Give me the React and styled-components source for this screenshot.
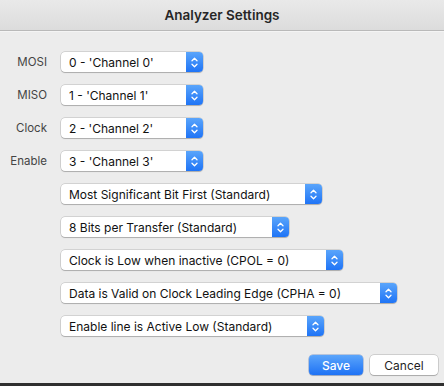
import { Fragment } from "react";
import styled, { createGlobalStyle } from "styled-components";

const GlobalStyle = createGlobalStyle`
  html, body {
    margin: 0;
    padding: 0;
    background: #ececec;
  }
  body {
    font-family: Inter, "Noto Sans", sans-serif;
    font-size: 12px;
    -webkit-font-smoothing: antialiased;
  }
`;

const Window = styled.div`
  width: 444px;
  height: 386px;
  box-sizing: border-box;
  display: flex;
  flex-direction: column;
  background: #ececec;
  border-bottom: 3px solid #2f2f2f;
`;

const TitleBar = styled.div`
  height: 30px;
  flex: none;
  display: flex;
  align-items: center;
  justify-content: center;
  background: linear-gradient(180deg, #e9e9e9 0%, #dcdcdc 100%);
  border-bottom: 1px solid #b9b9b9;
  box-shadow: 0 1px 0 #f4f4f4;
  font-size: 13.5px;
  font-weight: 600;
  color: #262626;
`;

const Content = styled.div`
  flex: 1;
  display: flex;
  flex-direction: column;
  padding: 21px 6px 0 0;
`;

const Form = styled.div`
  display: grid;
  grid-template-columns: 47px auto;
  column-gap: 14px;
  row-gap: 13px;
  justify-items: start;
  align-items: center;
`;

const Label = styled.span`
  justify-self: end;
  color: #444;
  font-size: 11.5px;
`;

const SelectBox = styled.div`
  grid-column: 2;
  width: ${(p) => p.$w}px;
  height: 20px;
  box-sizing: border-box;
  display: flex;
  align-items: stretch;
  background: #fff;
  border-radius: 4px;
  box-shadow: 0 0 0 0.5px rgba(0, 0, 0, 0.22), 0 1px 1px rgba(0, 0, 0, 0.18);
  overflow: hidden;
`;

const SelectText = styled.span`
  flex: 1;
  display: flex;
  align-items: center;
  padding-left: 8px;
  color: #111;
  white-space: nowrap;
  font-size: 12px;
`;

const Stepper = styled.span`
  width: 17px;
  flex: none;
  display: flex;
  align-items: center;
  justify-content: center;
  background: linear-gradient(180deg, #5aa5fb 0%, #1f74f6 100%);
`;

const Actions = styled.div`
  margin-top: auto;
  margin-bottom: 8px;
  display: flex;
  justify-content: flex-end;
  gap: 7px;
`;

const Button = styled.button`
  height: 20px;
  width: ${(p) => p.$w}px;
  padding: 0;
  border: none;
  border-radius: 4px;
  font-family: inherit;
  font-size: 12px;
  ${(p) =>
    p.$primary
      ? `
    color: #fff;
    font-weight: 500;
    background: linear-gradient(180deg, #5ba5fb 0%, #1e72f5 100%);
    box-shadow: 0 0 0 0.5px rgba(0, 60, 160, 0.45), 0 1px 1px rgba(0, 0, 0, 0.15);
  `
      : `
    color: #1f1f1f;
    background: #fff;
    box-shadow: 0 0 0 0.5px rgba(0, 0, 0, 0.25), 0 1px 1px rgba(0, 0, 0, 0.18);
  `}
`;

function Arrows() {
  return (
    <svg width="9" height="13" viewBox="0 0 9 13">
      <path
        d="M2 4.8 L4.5 2.3 L7 4.8 M2 8.2 L4.5 10.7 L7 8.2"
        fill="none"
        stroke="#fff"
        strokeWidth="1.3"
        strokeLinecap="round"
        strokeLinejoin="round"
      />
    </svg>
  );
}

function Select({ value, width }) {
  return (
    <SelectBox $w={width}>
      <SelectText>{value}</SelectText>
      <Stepper>
        <Arrows />
      </Stepper>
    </SelectBox>
  );
}

const channels = [
  ["MOSI", "0 - 'Channel 0'"],
  ["MISO", "1 - 'Channel 1'"],
  ["Clock", "2 - 'Channel 2'"],
  ["Enable", "3 - 'Channel 3'"],
];

const options = [
  ["Most Significant Bit First (Standard)", 261],
  ["8 Bits per Transfer (Standard)", 228],
  ["Clock is Low when inactive (CPOL = 0)", 282],
  ["Data is Valid on Clock Leading Edge (CPHA = 0)", 336],
  ["Enable line is Active Low (Standard)", 263],
];

export default function App() {
  return (
    <>
      <GlobalStyle />
      <Window>
        <TitleBar>Analyzer Settings</TitleBar>
        <Content>
          <Form>
            {channels.map(([label, value]) => (
              <Fragment key={label}>
                <Label>{label}</Label>
                <Select value={value} width={142} />
              </Fragment>
            ))}
            {options.map(([value, width]) => (
              <Select key={value} value={value} width={width} />
            ))}
          </Form>
          <Actions>
            <Button $primary $w={54}>Save</Button>
            <Button $w={68}>Cancel</Button>
          </Actions>
        </Content>
      </Window>
    </>
  );
}
